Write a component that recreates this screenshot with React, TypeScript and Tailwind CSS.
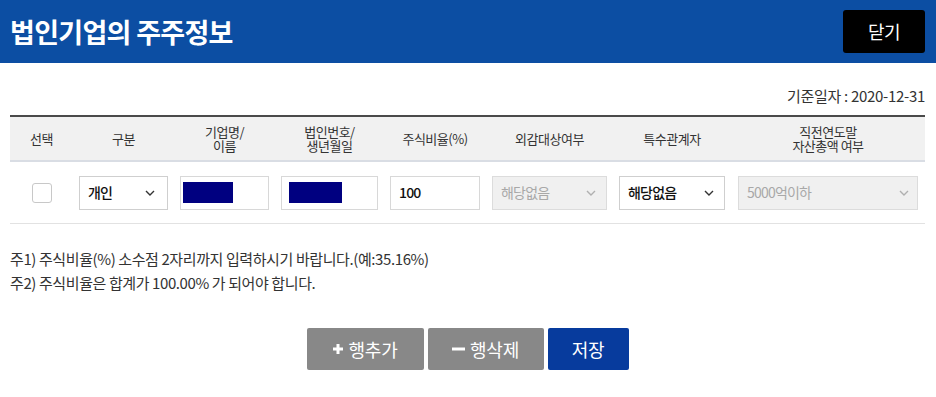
import React from "react";

const FONT = { fontFamily: '"Noto Sans CJK KR", "Noto Sans", sans-serif' };

function Chevron({ color }: { color: string }) {
  return (
    <svg width="10" height="6" viewBox="0 0 10 6" fill="none">
      <path d="M1 1l4 4 4-4" stroke={color} strokeWidth="1.4" />
    </svg>
  );
}

function Select({ label, disabled, pad = "pr-[12px]" }: { label: string; disabled?: boolean; pad?: string }) {
  return (
    <div
      className={`flex h-[34px] w-full items-center justify-between border pl-[8px] ${pad} ${
        disabled ? "border-[#dcdcdc] bg-[#f0f0f0] text-[#a8a8a8] font-normal" : "border-[#cfcfcf] bg-white text-[#111] font-medium"
      }`}
    >
      <span className="text-[14px] tracking-[-0.8px]">{label}</span>
      <Chevron color={disabled ? "#b0b0b0" : "#333"} />
    </div>
  );
}

function Masked({ w, pl }: { w: string; pl: string }) {
  return (
    <div className={`flex h-[34px] w-full items-center border border-[#d8d8d8] bg-white ${pl}`}>
      <div className={`h-[21px] bg-[#000080] ${w}`} />
    </div>
  );
}

const cols = ["w-[63px]", "w-[101px]", "w-[101px]", "w-[109px]", "w-[102px]", "w-[127px]", "w-[118px]", "w-[194px]"];

export default function App() {
  const heads: React.ReactNode[] = [
    "선택",
    "구분",
    <>
      기업명/
      <br />
      이름
    </>,
    <>
      법인번호/
      <br />
      생년월일
    </>,
    "주식비율(%)",
    "외감대상여부",
    "특수관계자",
    <>
      직전연도말
      <br />
      자산총액 여부
    </>,
  ];
  return (
    <div className="h-[397px] w-[936px] bg-white text-[#333]" style={FONT}>
      <div className="flex h-[63px] items-center justify-between bg-[#0c4ea3] pl-[10px] pr-[11px]">
        <h1 className="text-[27px] font-bold leading-none tracking-[-0.7px] text-white">법인기업의 주주정보</h1>
        <button className="flex h-[43px] w-[82px] items-center justify-center rounded-[3px] bg-black text-[18px] tracking-[-0.5px] text-white">
          닫기
        </button>
      </div>

      <div className="pl-[10px] pr-[11px]">
        <div className="mt-[23px] flex h-[20px] items-center justify-end text-[15px] tracking-[-0.3px] text-[#333]">
          기준일자 : 2020-12-31
        </div>

        <div className="mt-[9px] border-t-[2px] border-[#4a4a4a]">
          <div className="flex h-[45px] items-center border-b-[2px] border-[#d9dde4] bg-[#f1f1f1]">
            {heads.map((h, i) => (
              <div key={i} className={`${cols[i]} text-center text-[13px] leading-[14px] tracking-[-0.5px] text-[#333]`}>
                {h}
              </div>
            ))}
          </div>
          <div className="flex h-[62px] items-center border-b border-[#e2e2e2]">
            <div className={`${cols[0]} flex justify-center pl-[1px]`}>
              <div className="h-[20px] w-[20px] rounded-[3px] border border-[#c8c8c8] bg-white" />
            </div>
            <div className={`${cols[1]} px-[6px]`}>
              <Select label="개인" />
            </div>
            <div className={`${cols[2]} px-[6px]`}>
              <Masked w="w-[50px]" pl="pl-[2px]" />
            </div>
            <div className={`${cols[3]} px-[6px]`}>
              <Masked w="w-[53px]" pl="pl-[7px]" />
            </div>
            <div className={`${cols[4]} px-[6px]`}>
              <div className="flex h-[34px] w-full items-center border border-[#d8d8d8] bg-white pl-[8px] text-[14px] font-medium tracking-[-0.8px] text-[#111]">
                100
              </div>
            </div>
            <div className={`${cols[5]} px-[6px]`}>
              <Select label="해당없음" disabled pad="pr-[10px]" />
            </div>
            <div className={`${cols[6]} px-[6px]`}>
              <Select label="해당없음" pad="pr-[10px]" />
            </div>
            <div className={`${cols[7]} pl-[7px] pr-[7px]`}>
              <Select label="5000억이하" disabled pad="pr-[8px]" />
            </div>
          </div>
        </div>

        <div className="mt-[23px] text-[15px] leading-[24px] tracking-[-0.4px] text-[#333]">
          <p>주1) 주식비율(%) 소수점 2자리까지 입력하시기 바랍니다.(예:35.16%)</p>
          <p>주2) 주식비율은 합계가 100.00% 가 되어야 합니다.</p>
        </div>

        <div className="mt-[33px] flex justify-center gap-[4px]">
          <button className="flex h-[42px] w-[117px] items-center justify-center gap-[6px] rounded-[2px] bg-[#888888] text-[18px] tracking-[-0.3px] text-white">
            <svg width="10" height="10" viewBox="0 0 10 10">
              <path d="M5 0v10M0 5h10" stroke="white" strokeWidth="3" />
            </svg>
            행추가
          </button>
          <button className="flex h-[42px] w-[116px] items-center justify-center gap-[5px] rounded-[2px] bg-[#888888] text-[18px] tracking-[-0.3px] text-white">
            <svg width="13" height="10" viewBox="0 0 13 10">
              <path d="M0 5h13" stroke="white" strokeWidth="3" />
            </svg>
            행삭제
          </button>
          <button className="flex h-[42px] w-[81px] items-center justify-center rounded-[2px] bg-[#073b9d] text-[18px] tracking-[-0.3px] text-white">
            저장
          </button>
        </div>
      </div>
    </div>
  );
}
